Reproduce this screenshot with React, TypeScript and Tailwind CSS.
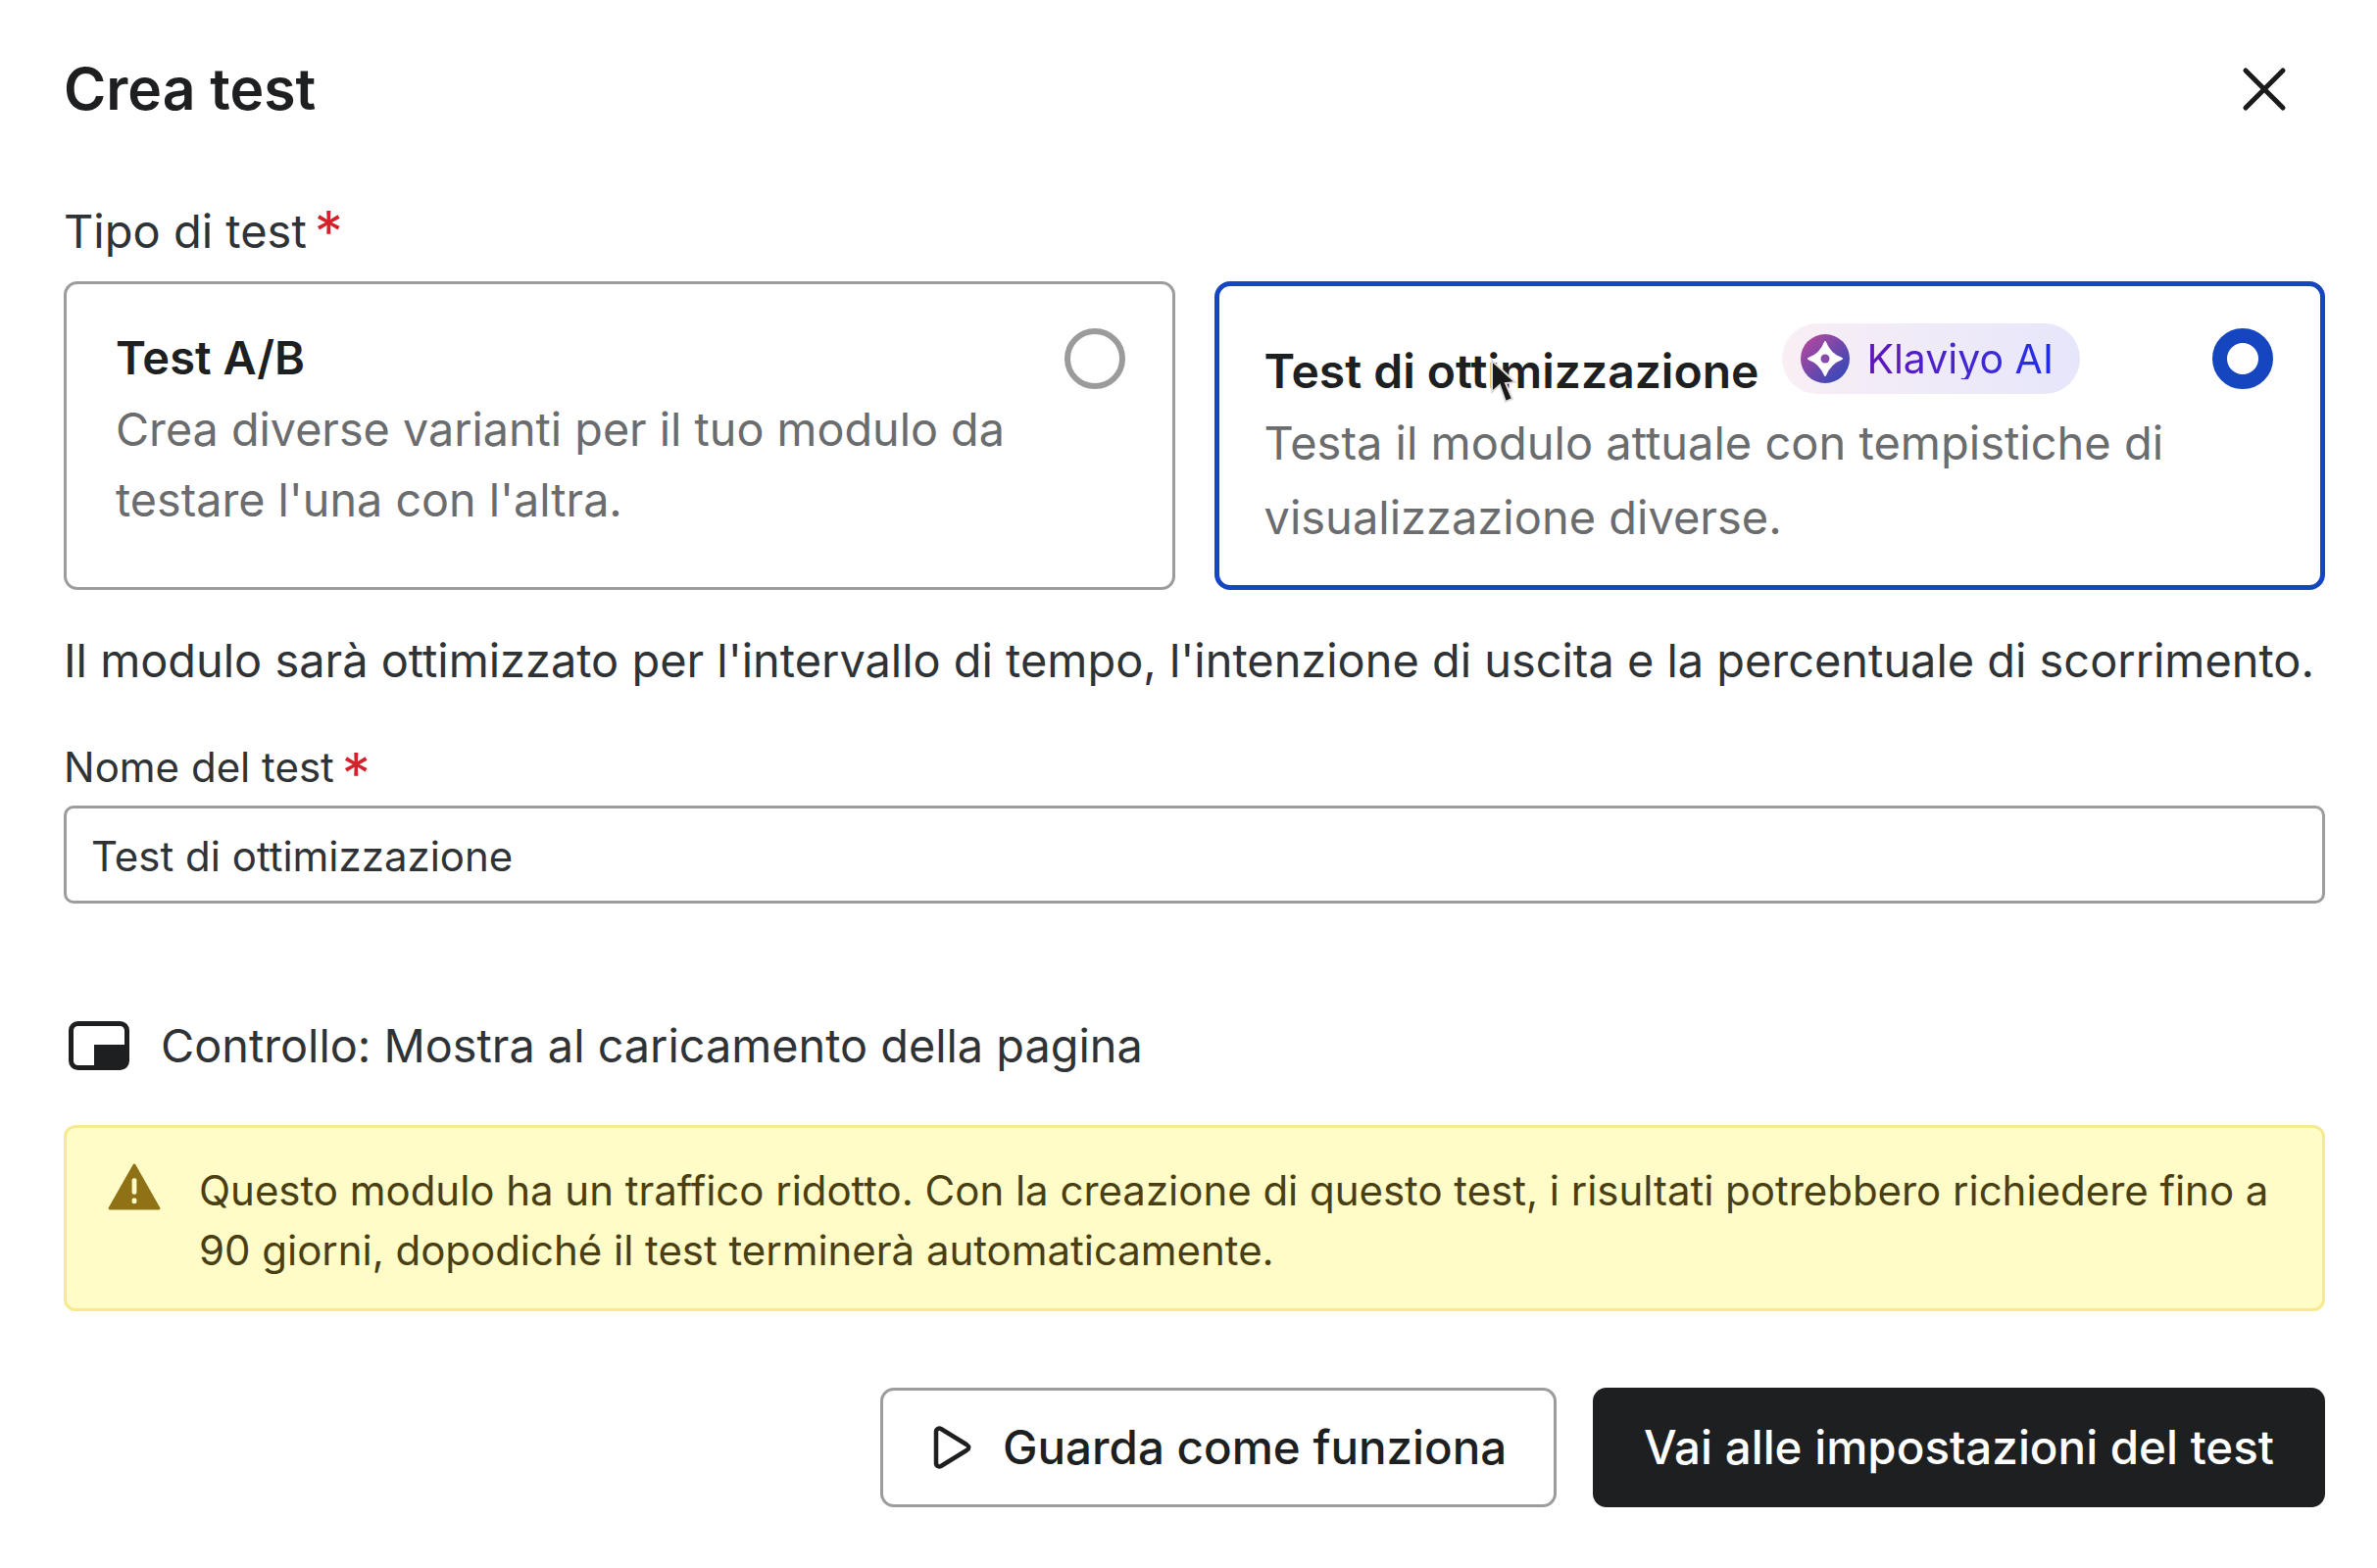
import { X } from 'lucide-react';

const font = "font-['Inter',sans-serif]";

function Star({ className }: { className: string }) {
    return <span className={`text-[#d3222a] text-[58px] leading-none h-[34px] ml-[8px] ${className}`}>*</span>;
}

function KlaviyoBadge() {
    return (
        <span className="inline-flex items-center h-[72px] w-[304px] pl-[18px] rounded-full bg-gradient-to-r from-[#f9eff5] to-[#e6e6fb]">
            <svg width="52" height="52" viewBox="0 0 52 52">
                <defs>
                    <linearGradient id="kl" x1="0" y1="0" x2="1" y2="1">
                        <stop offset="0" stopColor="#c0479a" />
                        <stop offset="1" stopColor="#2449bd" />
                    </linearGradient>
                </defs>
                <circle cx="26" cy="26" r="25" fill="url(#kl)" />
                <path d="M26 9 C29 17 35 23 43 26 C35 29 29 35 26 43 C23 35 17 29 9 26 C17 23 23 17 26 9Z" fill="#fff" stroke="#fff" strokeWidth="2" strokeLinejoin="round" />
                <circle cx="26" cy="26" r="4.5" fill="#8a4aa8" />
            </svg>
            <span className="ml-[16px] text-[41px] leading-none bg-gradient-to-r from-[#5f14b8] to-[#1a2ee8] bg-clip-text text-transparent">Klaviyo AI</span>
        </span>
    );
}

export default function App() {
    return (
        <div className={`${font} w-[2425px] h-[1600px] bg-white text-[#1d1f21] pl-[65px] pr-[53px] pt-[56px] overflow-hidden relative`}>
            <div className="flex items-center justify-between h-[70px]">
                <h1 className="text-[58.8px] font-semibold leading-none">Crea test</h1>
                <X size={76} strokeWidth={1.6} className="mr-[24px] text-[#1a1a1a]" />
            </div>

            <div className="mt-[82px] h-[56px] flex items-center text-[47px] text-[#303336]">Tipo di test<Star className="mt-[-24px]" /></div>

            <div className="mt-[23px] grid grid-cols-2 gap-[40px] h-[315px]">
                <div className="relative border-[3px] border-[#9c9c9c] rounded-[14px] pl-[50px] pt-[42px]">
                    <div className="text-[47px] font-semibold leading-[66px] text-[#1d1f21]">Test A/B</div>
                    <div className="text-[46.7px] leading-[72px] text-[#6a6c6e] mt-[4px]">
                        Crea diverse varianti per il tuo modulo da<br />testare l'una con l'altra.
                    </div>
                    <span className="absolute right-[48px] top-[45px] w-[62px] h-[62px] rounded-full border-[6px] border-[#9b9b9b]" />
                </div>
                <div className="relative border-[5px] border-[#1546c0] rounded-[16px] pl-[46px] pt-[38px]">
                    <div className="flex items-start">
                        <span className="text-[48px] font-semibold leading-[66px] mt-[16px] text-[#1d1f21]">Test di ottimizzazione</span>
                        <span className="ml-[24px]"><KlaviyoBadge /></span>
                    </div>
                    <div className="text-[47px] leading-[76px] text-[#6a6c6e] mt-[2px]">
                        Testa il modulo attuale con tempistiche di<br />visualizzazione diverse.
                    </div>
                    <span className="absolute right-[48px] top-[43px] w-[62px] h-[62px] rounded-full border-[15px] border-[#1546c0]" />
                    <svg className="absolute left-[275px] top-[74px]" width="30" height="50" viewBox="0 0 30 50">
                        <path d="M3 2 L3 34 L11 27 L17 44 L24 41 L17 25 L27 24 Z" fill="#1a1a1a" stroke="#ddd" strokeWidth="2" />
                    </svg>
                </div>
            </div>

            <p className="mt-[37px] text-[46.9px] leading-[70px] text-[#303336] whitespace-nowrap">
                Il modulo sarà ottimizzato per l'intervallo di tempo, l'intenzione di uscita e la percentuale di scorrimento.
            </p>

            <div className="mt-[47px] h-[52px] flex items-center text-[42px] text-[#303336]">Nome del test<Star className="mt-[-10px]" /></div>

            <div className="mt-[14px] h-[100px] border-[3px] border-[#9c9c9c] rounded-[10px] flex items-center pl-[25px] pt-[2px] text-[42px] text-[#303336]">
                Test di ottimizzazione
            </div>

            <div className="mt-[112px] h-[66px] flex items-center text-[46.8px] text-[#303336]">
                <svg width="62" height="50" viewBox="0 0 62 50" className="ml-[5px]">
                    <rect x="2.5" y="2.5" width="57" height="45" rx="7" fill="#fff" stroke="#1d1f21" strokeWidth="5" />
                    <path d="M26 24 H58 V41 a6 6 0 0 1 -6 6 H26 Z" fill="#1d1f21" />
                </svg>
                <span className="ml-[32px]">Controllo: Mostra al caricamento della pagina</span>
            </div>

            <div className="mt-[48px] h-[190px] bg-[#fffcc8] border-[3px] border-[#f7ea8e] rounded-[12px] flex pl-[42px] pt-[33px]">
                <svg width="54" height="48" viewBox="0 0 56 50" className="shrink-0 mt-[3px]">
                    <path d="M28 2 L54 48 H2 Z" fill="#8f7216" stroke="#8f7216" strokeWidth="3" strokeLinejoin="round" />
                    <rect x="25.5" y="16" width="5" height="17" rx="2" fill="#fffcc8" />
                    <rect x="25.5" y="37" width="5" height="6" rx="2" fill="#fffcc8" />
                </svg>
                <p className="ml-[39px] text-[42px] leading-[61px] text-[#4a3f12] tracking-[-0.03px]">
                    Questo modulo ha un traffico ridotto. Con la creazione di questo test, i risultati potrebbero richiedere fino a<br />
                    90 giorni, dopodiché il test terminerà automaticamente.
                </p>
            </div>

            <div className="mt-[78px] flex justify-end gap-[37px]">
                <button className="w-[690px] h-[122px] border-[3px] border-[#9c9c9c] rounded-[14px] flex items-center pl-[50px] text-[47.5px] font-medium text-[#1d1f21]">
                    <svg width="40" height="44" viewBox="0 0 40 44" fill="none" stroke="#1d1f21" strokeWidth="4.5" strokeLinejoin="round">
                        <path d="M4 6 C4 3 7 2 9 3 L35 19 C38 21 38 23 35 25 L9 41 C7 42 4 41 4 38 Z" />
                    </svg>
                    <span className="ml-[32px]">Guarda come funziona</span>
                </button>
                <button className="w-[747px] h-[122px] rounded-[14px] bg-[#1d1f21] text-white text-[47.5px] font-medium flex items-center justify-center">
                    Vai alle impostazioni del test
                </button>
            </div>
        </div>
    );
}
